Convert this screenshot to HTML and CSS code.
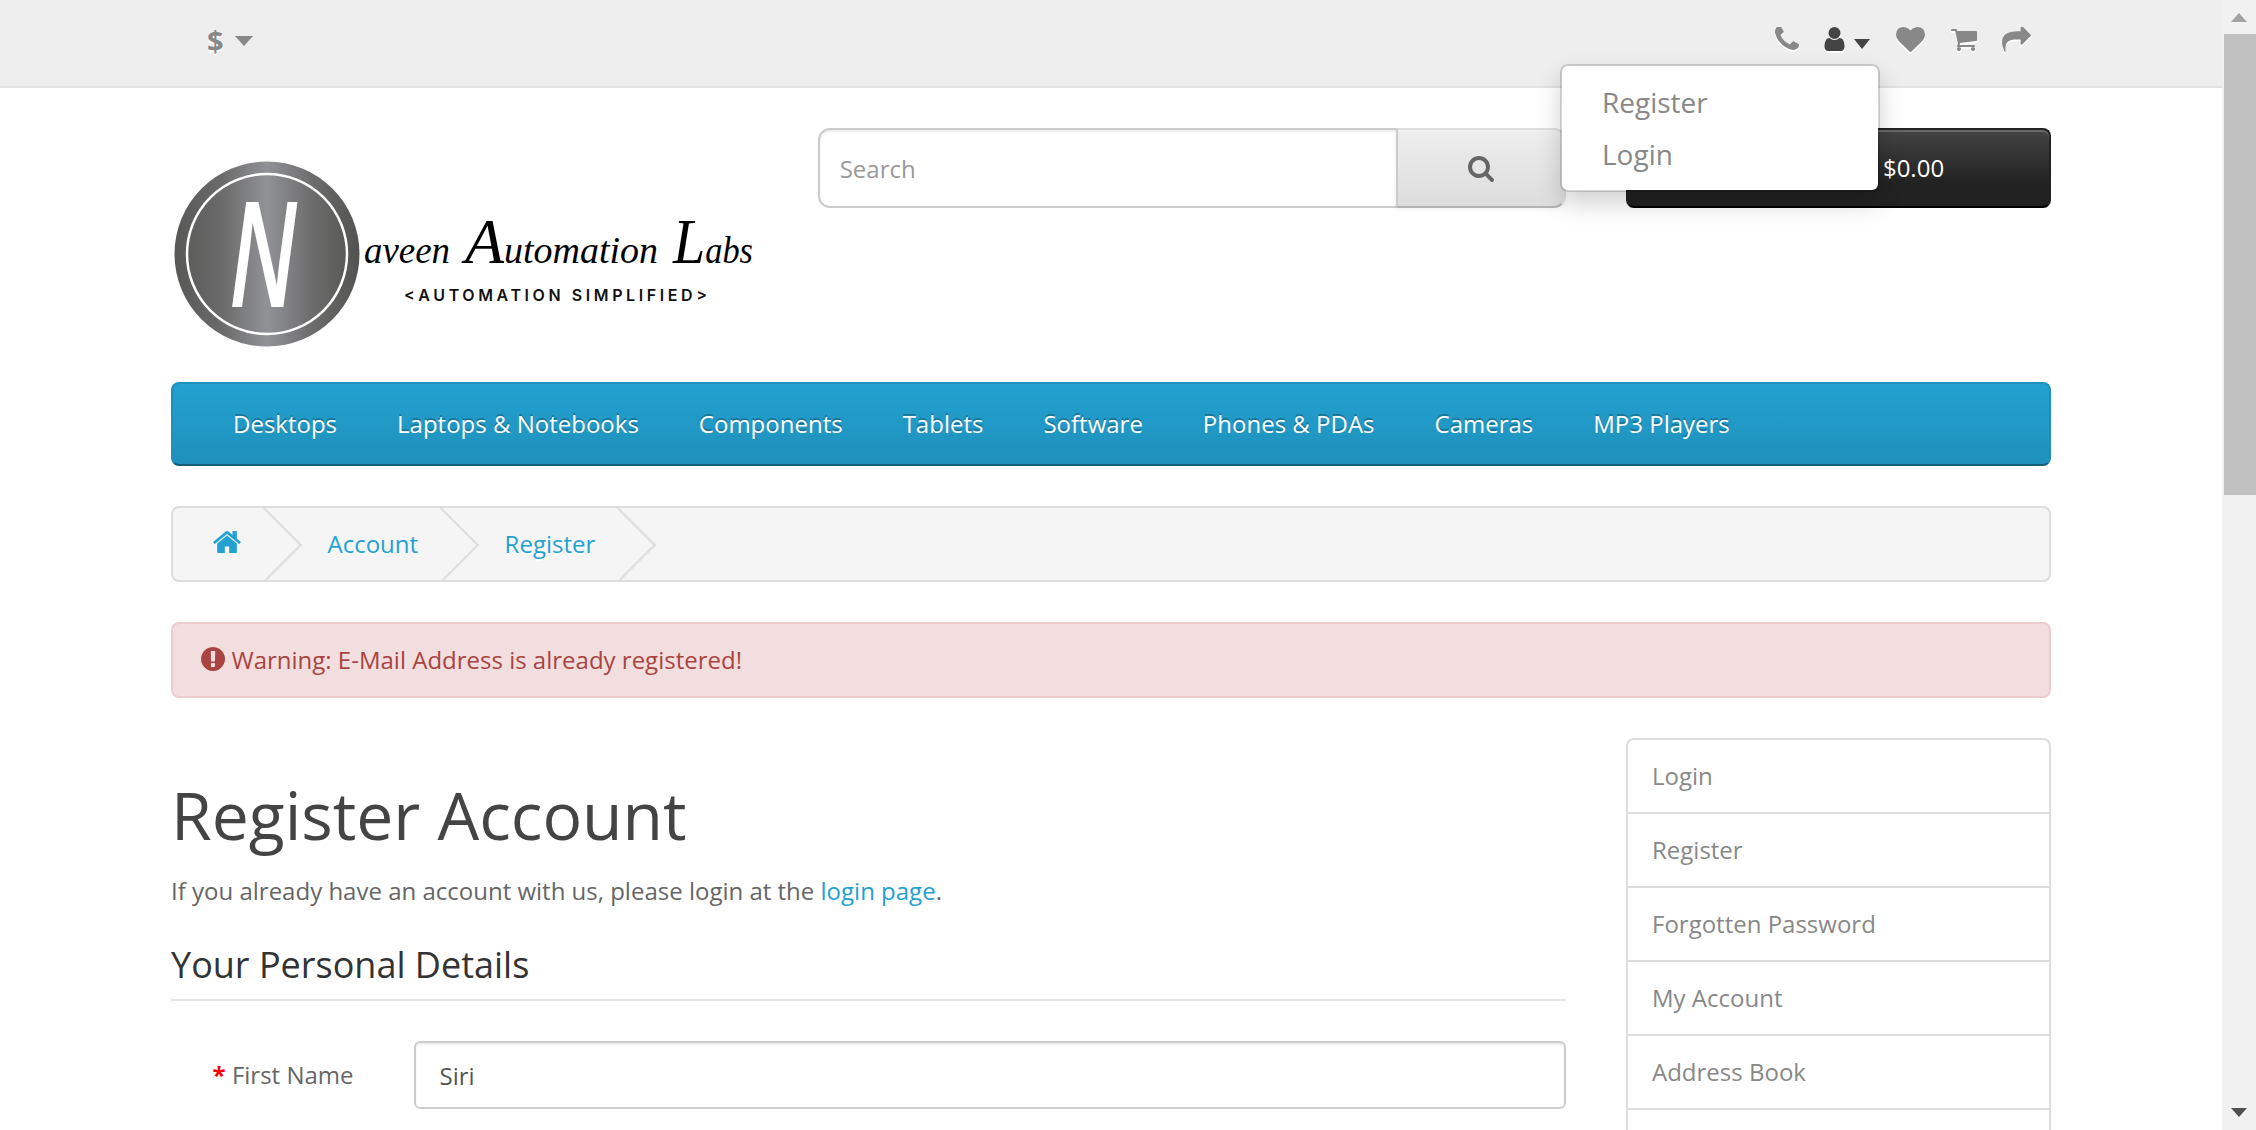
FILE: index.html
```html
<!DOCTYPE html>
<html lang="en">
<head>
    <meta charset="UTF-8">
    <title>Register Account</title>
    <link rel="stylesheet" href="styles.css">
</head>
<body>

    <div class="page">
        <div class="top">
            <div class="container top-row">
                <div class="currency">
                    <strong>$</strong>
                    <span class="caret"></span>
                </div>
                <div class="top-links">
                    <svg class="ico-phone" viewBox="192 192 1408 1408"><path d="M1600 1240q0 27-10 70.500t-21 68.500q-21 50-122 106-94 51-186 51-27 0-53-3.500t-57.500-12.500-47-14.500-55.500-20.500-49-18q-98-35-175-83-127-79-264-216t-216-264q-48-77-83-175-3-9-18-49t-20.500-55.500-14.500-47-12.500-57.500-3.500-53q0-92 51-186 56-101 106-122 25-11 68.500-21t70.500-10q14 0 21 3 18 6 53 76 11 19 30 54t35 63.500 31 53.500q3 4 17.500 25t21.500 35.500 7 28.500q0 20-28.500 50t-62 55-62 53-28.500 46q0 9 5 22.500t8.500 20.500 14 24 11.500 19q76 137 174 235t235 174q2 1 19 11.500t24 14 20.500 8.500 22.500 5q18 0 46-28.500t53-62 55-62 50-28.500q14 0 28.500 7t35.500 21.500 25 17.500q25 15 53.500 31t63.500 35 54 30q70 35 76 53 3 7 3 21z"/></svg>
                    <svg class="ico-user" viewBox="256 128 1280 1536"><path d="M1536 1399q0 109-62.500 187t-150.500 78h-854q-88 0-150.500-78t-62.500-187q0-85 8.500-160.500t31.500-152 58.500-131 94-89 134.500-34.500q131 128 313 128t313-128q76 0 134.500 34.500t94 89 58.500 131 31.500 152 8.500 160.500zm-256-887q0 159-112.500 271.500t-271.500 112.500-271.500-112.500-112.500-271.500 112.500-271.500 271.500-112.500 271.500 112.500 112.500 271.500z"/></svg>
                    <span class="caret caret-dark"></span>
                    <svg class="ico-heart" viewBox="0 128 1792 1536"><path d="M896 1664q-26 0-44-18l-624-602q-10-8-27.500-26t-55.500-65.500-68-97.500-53.500-121-23.500-138q0-220 127-344t351-124q62 0 126.500 21.500t120 58 95.500 68.500 76 68q36-36 76-68t95.500-68.500 120-58 126.500-21.500q224 0 351 124t127 344q0 221-229 450l-623 600q-18 18-44 18z"/></svg>
                    <svg class="ico-cart" viewBox="64 256 1664 1408"><path d="M704 1536q0 52-38 90t-90 38-90-38-38-90 38-90 90-38 90 38 38 90zm896 0q0 52-38 90t-90 38-90-38-38-90 38-90 90-38 90 38 38 90zm128-1088v512q0 24-16.500 42.500t-40.500 21.500l-1044 122q13 60 13 70 0 16-24 64h920q26 0 45 19t19 45-19 45-45 19h-1024q-26 0-45-19t-19-45q0-11 8-31.500t16-36 21.500-40 15.500-29.500l-177-823h-204q-26 0-45-19t-19-45 19-45 45-19h256q16 0 28.500 6.500t19.500 15.500 13 24.500 8 26 5.500 29.500 4.500 26h1201q26 0 45 19t19 45z"/></svg>
                    <svg class="ico-share" viewBox="0 192 1792 1408"><path d="M1792 640q0 26-19 45l-512 512q-19 19-45 19t-45-19-19-45v-256h-224q-98 0-175.500 6t-154 21.500-133 42.500-105.500 69.500-80 101-48.500 138.500-17.500 181q0 55 5 123 0 6 2.500 23.500t2.500 26.500q0 15-8.500 25t-23.500 10q-16 0-28-17-7-9-13-22t-13.500-30-10.500-24q-127-285-127-451 0-199 53-333 162-403 875-403h224v-256q0-26 19-45t45-19 45 19l512 512q19 19 19 45z"/></svg>
                    <ul class="dropdown">
                        <li><a href="#">Register</a></li>
                        <li><a href="#">Login</a></li>
                    </ul>
                </div>
            </div>
        </div>

        <header class="container header">
            <div class="logo">
                <svg width="600" height="234" viewBox="171 128 600 234">
                    <defs>
                        <linearGradient id="metal" x1="0" y1="0" x2="1" y2="0">
                            <stop offset="0" stop-color="#585857"/>
                            <stop offset="0.25" stop-color="#6a6a6a"/>
                            <stop offset="0.5" stop-color="#919296"/>
                            <stop offset="0.75" stop-color="#6c6c6c"/>
                            <stop offset="1" stop-color="#525250"/>
                        </linearGradient>
                    </defs>
                    <circle cx="267" cy="254" r="92.500" fill="url(#metal)"/>
                    <circle cx="267" cy="254" r="80" fill="none" stroke="#fff" stroke-width="2.500"/>
                    <text x="229" y="307" class="logo-n" textLength="68" lengthAdjust="spacingAndGlyphs">N</text>
                    <text x="364" y="263" class="logo-script" textLength="86" lengthAdjust="spacingAndGlyphs">aveen</text>
                    <text x="465" y="263" class="logo-script" textLength="193" lengthAdjust="spacingAndGlyphs"><tspan class="logo-big">A</tspan>utomation</text>
                    <text x="673" y="263" class="logo-script" textLength="80" lengthAdjust="spacingAndGlyphs"><tspan class="logo-big">L</tspan>abs</text>
                    <text x="404" y="301" class="logo-tag" textLength="303">&lt;AUTOMATION SIMPLIFIED&gt;</text>
                </svg>
            </div>
            <div class="search">
                <input type="text" class="search-input" placeholder="Search">
                <button type="button" class="search-btn">
                    <svg viewBox="64 128 1664 1664"><path d="M1216 832q0-185-131.500-316.500t-316.500-131.500-316.500 131.500-131.500 316.500 131.500 316.500 316.500 131.500 316.500-131.500 131.500-316.500zm512 832q0 52-38 90t-90 38q-54 0-90-38l-343-342q-179 124-399 124-143 0-273.500-55.500t-225-150-150-225-55.500-273.500 55.500-273.500 150-225 225-150 273.500-55.500 273.500 55.500 225 150 150 225 55.500 273.500q0 220-124 399l343 343q37 37 37 90z"/></svg>
                </button>
            </div>
            <button type="button" class="cart-btn">0 item(s) - $0.00</button>
        </header>

        <div class="container">
            <nav class="menu">
                <a href="#">Desktops</a>
                <a href="#">Laptops &amp; Notebooks</a>
                <a href="#">Components</a>
                <a href="#">Tablets</a>
                <a href="#">Software</a>
                <a href="#">Phones &amp; PDAs</a>
                <a href="#">Cameras</a>
                <a href="#">MP3 Players</a>
            </nav>

            <ul class="breadcrumb">
                <li><a href="#"><svg class="ico-home" viewBox="96 192 1600 1344"><path d="M1472 992v480q0 26-19 45t-45 19h-384v-384h-256v384h-384q-26 0-45-19t-19-45v-480q0-1 .5-3t.5-3l575-474 575 474q1 2 1 6zm223-69l-62 74q-8 9-21 11h-3q-13 0-21-7l-692-577-692 577q-12 8-24 7-13-2-21-11l-62-74q-8-10-7-23.500t11-21.500l719-599q32-26 76-26t76 26l244 204v-195q0-14 9-23t23-9h192q14 0 23 9t9 23v408l219 182q10 8 11 21.500t-7 23.500z"/></svg></a></li>
                <li><a href="#">Account</a></li>
                <li><a href="#">Register</a></li>
            </ul>

            <div class="alert">
                <svg class="ico-alert" viewBox="128 128 1536 1536"><path d="M896 128q209 0 385.500 103t279.500 279.500 103 385.500-103 385.500-279.500 279.500-385.500 103-385.500-103-279.500-279.500-103-385.500 103-385.500 279.500-279.500 385.500-103zm128 1247v-190q0-14-9-23.500t-22-9.500h-192q-13 0-23 10t-10 23v190q0 13 10 23t23 10h192q13 0 22-9.500t9-23.500zm-2-344l18-621q0-12-10-18-10-8-24-8h-220q-14 0-24 8-10 6-10 18l17 621q0 10 10 17.500t24 7.500h185q14 0 23.500-7.500t10.500-17.500z"/></svg>
                <span>Warning: E-Mail Address is already registered!</span>
            </div>

            <div class="columns">
                <main class="content">
                    <h1>Register Account</h1>
                    <p>If you already have an account with us, please login at the <a href="#">login page</a>.</p>
                    <form>
                        <fieldset>
                            <legend>Your Personal Details</legend>
                            <div class="form-row">
                                <label for="firstName"><span class="req">*</span> First Name</label>
                                <input type="text" id="firstName" value="Siri">
                            </div>
                        </fieldset>
                    </form>
                </main>
                <aside class="side">
                    <a href="#">Login</a>
                    <a href="#">Register</a>
                    <a href="#">Forgotten Password</a>
                    <a href="#">My Account</a>
                    <a href="#">Address Book</a>
                    <a href="#"></a>
                </aside>
            </div>
        </div>
    </div>

    <div class="scrollbar">
        <span class="arrow-up"></span>
        <div class="thumb"></div>
        <span class="arrow-down"></span>
    </div>

</body>
</html>
```

FILE: styles.css
```css
html, body {
    height: 100%;
}

body {
    margin: 0;
    display: flex;
    overflow: hidden;
    font-family: "Open Sans", sans-serif;
    font-size: 24px;
    line-height: 40px;
    color: #666;
    background: #fff;
}

a {
    color: #23a1d1;
    text-decoration: none;
}

ul {
    list-style: none;
    margin: 0;
    padding: 0;
}

.page {
    flex: 1;
    min-width: 0;
    height: 100%;
    overflow: hidden;
}

.container {
    width: 1880px;
    margin: 0 auto;
}

/* top bar */
.top {
    height: 86px;
    background: #eee;
    border-bottom: 2px solid #e2e2e2;
    margin-bottom: 40px;
}

.top-row {
    display: flex;
    justify-content: space-between;
}

.currency {
    display: flex;
    align-items: center;
    gap: 11px;
    height: 82px;
    padding-left: 36px;
    color: #888;
    font-size: 29px;
    text-shadow: 0 2px 0 #fff;
}

.caret {
    width: 0;
    height: 0;
    border-left: 9px solid transparent;
    border-right: 9px solid transparent;
    border-top: 10px solid #888;
}

.caret-dark {
    border-left-width: 8px;
    border-right-width: 8px;
    border-top-color: #444;
    margin: 12px 26px 0 9px;
}

.top-links {
    position: relative;
    display: flex;
    align-items: flex-start;
    padding: 27px 20px 0 0;
}

.top-links svg {
    display: block;
    fill: #888;
    filter: drop-shadow(0 2px 0 #fff);
}

.ico-phone {
    width: 24px;
    height: 24px;
    margin-right: 25px;
}

.top-links .ico-user {
    width: 21px;
    height: 24px;
    fill: #444;
}

.ico-heart {
    width: 29px;
    height: 25px;
    margin-right: 26px;
}

.ico-cart {
    width: 26px;
    height: 22px;
    margin: 2px 25px 0 0;
}

.ico-share {
    width: 29px;
    height: 25px;
}

.dropdown {
    position: absolute;
    top: 64px;
    right: 171px;
    width: 316px;
    padding: 10px 0;
    background: #fff;
    border: 2px solid rgba(0, 0, 0, 0.15);
    border-radius: 8px;
    background-clip: padding-box;
    box-shadow: 0 12px 24px rgba(0, 0, 0, 0.175);
    z-index: 10;
}

.dropdown a {
    display: block;
    padding: 6px 40px;
    font-size: 28px;
    color: #888;
}

/* header */
.header {
    display: flex;
    align-items: flex-start;
}

.logo {
    width: 646.67px;
    height: 254px;
    flex: none;
}

.logo svg {
    display: block;
}

.logo-n {
    font-family: "Open Sans", sans-serif;
    font-style: italic;
    font-weight: 600;
    font-size: 146px;
    fill: #fff;
}

.logo-script {
    font-family: "Liberation Serif", serif;
    font-style: italic;
    font-size: 38px;
    fill: #000;
}

.logo-big {
    font-size: 64px;
}

.logo-tag {
    font-family: Inter, sans-serif;
    font-weight: 600;
    font-size: 16px;
    fill: #111;
}

.search {
    display: flex;
    width: 748.33px;
    height: 80px;
    flex: none;
}

.search-input {
    flex: 1;
    min-width: 0;
    box-sizing: border-box;
    height: 80px;
    padding: 0 20px;
    font-family: inherit;
    font-size: 24px;
    color: #555;
    border: 2px solid #ccc;
    border-radius: 12px 0 0 12px;
    box-shadow: inset 0 2px 2px rgba(0, 0, 0, 0.075);
    outline: none;
}

.search-input::placeholder {
    color: #999;
    opacity: 1;
}

.search-btn {
    width: 170px;
    height: 80px;
    margin-left: -2px;
    padding: 2px 0 0;
    display: flex;
    align-items: center;
    justify-content: center;
    background: linear-gradient(to bottom, #eeeeee, #dddddd);
    border: 2px solid #ddd;
    border-bottom-color: #b3b3b3;
    border-left-color: #ccc;
    border-radius: 0 12px 12px 0;
    box-shadow: inset 0 2px 0 rgba(255, 255, 255, 0.2), 0 2px 4px rgba(0, 0, 0, 0.05);
}

.search-btn svg {
    width: 26px;
    height: 26px;
    fill: #666;
}

.cart-btn {
    width: 425px;
    height: 80px;
    margin-left: 60px;
    flex: none;
    padding: 0 0 2px 34px;
    font-family: inherit;
    font-size: 24px;
    color: #fff;
    background: linear-gradient(to bottom, #444444, #222222 70%);
    border: 2px solid #222;
    border-bottom-color: #000;
    border-radius: 8px;
    box-shadow: inset 0 2px 0 rgba(255, 255, 255, 0.2);
}

/* menu */
.menu {
    display: flex;
    gap: 60px;
    height: 80px;
    padding-left: 60px;
    margin-bottom: 40px;
    background: linear-gradient(to bottom, #23a1d1, #1f90bb);
    border: 2px solid #1f90bb;
    border-bottom-color: #145e7a;
    border-radius: 8px;
}

.menu a {
    line-height: 80px;
    color: #fff;
    text-shadow: 0 -2px 0 rgba(0, 0, 0, 0.25);
}

/* breadcrumb */
.breadcrumb {
    display: flex;
    gap: 6.500px;
    padding: 16px 0;
    margin-bottom: 40px;
    background: #f5f5f5;
    border: 2px solid #ddd;
    border-radius: 8px;
    overflow: hidden;
}

.breadcrumb li {
    position: relative;
    padding: 0 40px;
    white-space: nowrap;
    text-shadow: 0 2px 0 #fff;
}

.breadcrumb li::after {
    content: '';
    position: absolute;
    top: -6px;
    right: -10px;
    width: 52px;
    height: 52px;
    border-right: 2px solid #ddd;
    border-bottom: 2px solid #ddd;
    transform: rotate(-45deg);
}

.ico-home {
    display: block;
    width: 28px;
    height: 23px;
    margin-top: 6px;
    fill: #23a1d1;
}

/* alert */
.alert {
    display: flex;
    align-items: center;
    gap: 6.500px;
    padding: 16px 28px;
    margin-bottom: 50px;
    color: #a94442;
    background: #f2dede;
    border: 2px solid #ebccd1;
    border-radius: 8px;
}

.ico-alert {
    width: 24px;
    height: 24px;
    fill: #a94442;
    margin-top: -2px;
}

/* content */
.columns {
    display: flex;
    gap: 60px;
}

.content {
    flex: 1;
    min-width: 0;
}

h1 {
    margin: 30px 0 21px;
    font-size: 66px;
    font-weight: 400;
    line-height: 72px;
    color: #444;
}

p {
    margin: 0 0 20px;
}

fieldset {
    margin: 0;
    padding: 0;
    border: 0;
}

legend {
    display: block;
    width: 100%;
    padding: 14px 0;
    margin-bottom: 40px;
    font-size: 36px;
    line-height: 40px;
    color: #333;
    border-bottom: 2px solid #e5e5e5;
}

.form-row {
    display: flex;
    gap: 60px;
    margin-bottom: 30px;
}

label {
    width: 182.500px;
    flex: none;
    text-align: right;
    line-height: 68px;
    white-space: nowrap;
}

.req {
    color: #f00;
    font-weight: 700;
}

.form-row input {
    flex: 1;
    min-width: 0;
    box-sizing: border-box;
    height: 68px;
    padding: 0 24px;
    font-family: inherit;
    font-size: 24px;
    color: #555;
    border: 2px solid #ccc;
    border-radius: 6px;
    box-shadow: inset 0 2px 2px rgba(0, 0, 0, 0.075);
    outline: none;
}

.side {
    width: 425px;
    flex: none;
    margin-top: -10px;
}

.side a {
    display: block;
    min-height: 40px;
    padding: 16px 24px;
    margin-bottom: -2px;
    color: #888;
    border: 2px solid #ddd;
}

.side a:first-child {
    border-radius: 8px 8px 0 0;
}

/* the page's own scrollbar */
.scrollbar {
    width: 34px;
    height: 100%;
    flex: none;
    display: flex;
    flex-direction: column;
    align-items: center;
    background: #f1f1f1;
}

.arrow-up,
.arrow-down {
    width: 0;
    height: 0;
    border-left: 8px solid transparent;
    border-right: 8px solid transparent;
}

.arrow-up {
    margin-top: 13px;
    border-bottom: 9px solid #a3a3a3;
}

.arrow-down {
    margin-top: auto;
    margin-bottom: 13px;
    border-top: 9px solid #505050;
}

.thumb {
    width: 32px;
    height: 461px;
    margin: 12px 0 0 2px;
    background: #c1c1c1;
}
```
